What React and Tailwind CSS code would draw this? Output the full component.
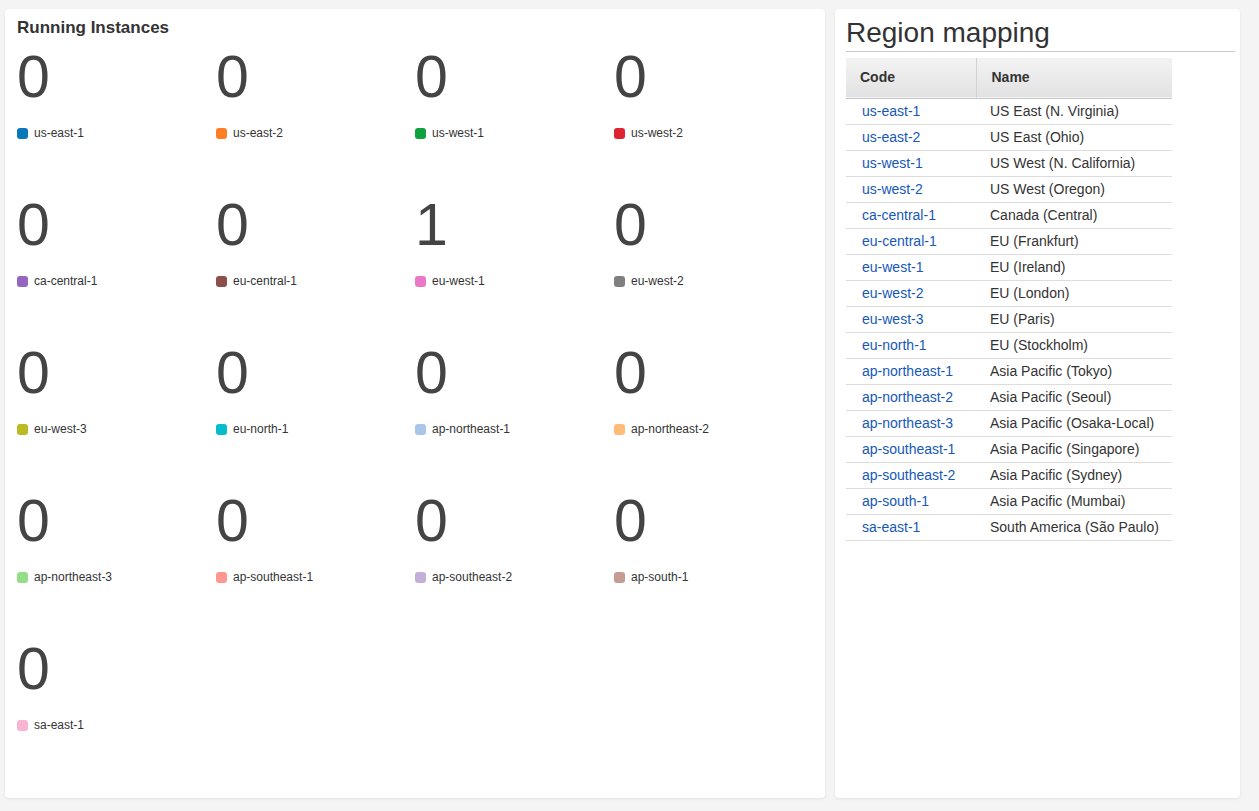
import React from 'react';

const instances = [
    { code: 'us-east-1', count: 0, color: '#0a77b7' },
    { code: 'us-east-2', count: 0, color: '#fd7e23' },
    { code: 'us-west-1', count: 0, color: '#0fa13f' },
    { code: 'us-west-2', count: 0, color: '#de2430' },
    { code: 'ca-central-1', count: 0, color: '#9466bd' },
    { code: 'eu-central-1', count: 0, color: '#8b5049' },
    { code: 'eu-west-1', count: 1, color: '#ea78c6' },
    { code: 'eu-west-2', count: 0, color: '#7f7f7f' },
    { code: 'eu-west-3', count: 0, color: '#babb24' },
    { code: 'eu-north-1', count: 0, color: '#06bccd' },
    { code: 'ap-northeast-1', count: 0, color: '#a9c6e9' },
    { code: 'ap-northeast-2', count: 0, color: '#ffbb78' },
    { code: 'ap-northeast-3', count: 0, color: '#93df88' },
    { code: 'ap-southeast-1', count: 0, color: '#ff9692' },
    { code: 'ap-southeast-2', count: 0, color: '#c4afd6' },
    { code: 'ap-south-1', count: 0, color: '#c59b93' },
    { code: 'sa-east-1', count: 0, color: '#f8b4d3' },
];

const regions = [
    ['us-east-1', 'US East (N. Virginia)'],
    ['us-east-2', 'US East (Ohio)'],
    ['us-west-1', 'US West (N. California)'],
    ['us-west-2', 'US West (Oregon)'],
    ['ca-central-1', 'Canada (Central)'],
    ['eu-central-1', 'EU (Frankfurt)'],
    ['eu-west-1', 'EU (Ireland)'],
    ['eu-west-2', 'EU (London)'],
    ['eu-west-3', 'EU (Paris)'],
    ['eu-north-1', 'EU (Stockholm)'],
    ['ap-northeast-1', 'Asia Pacific (Tokyo)'],
    ['ap-northeast-2', 'Asia Pacific (Seoul)'],
    ['ap-northeast-3', 'Asia Pacific (Osaka-Local)'],
    ['ap-southeast-1', 'Asia Pacific (Singapore)'],
    ['ap-southeast-2', 'Asia Pacific (Sydney)'],
    ['ap-south-1', 'Asia Pacific (Mumbai)'],
    ['sa-east-1', 'South America (São Paulo)'],
];

function InstanceCell({ item }) {
    return (
        <div className="h-[148px]">
            <div className="text-[59px] leading-[60px] text-[#444]">{item.count}</div>
            <div className="mt-[18px] h-4 flex items-center gap-[6px]">
                <span className="w-[11px] h-[11px] rounded-[3px]" style={{ backgroundColor: item.color }} />
                <span className="text-[12px] text-[#333]">{item.code}</span>
            </div>
        </div>
    );
}

export default function App() {
    return (
        <div className="min-h-[811px] bg-[#f4f4f4] flex gap-[10px] pt-[9px] pl-[5px] pb-[13px] font-['Liberation_Sans',Arial,sans-serif]">
            {/* Running instances */}
            <div className="w-[820px] h-[789px] bg-white rounded-[4px] shadow-[0_1px_3px_rgba(0,0,0,0.08)] pt-[9px] px-[12px]">
                <h2 className="text-[17px] leading-[20px] font-bold text-[#333]">Running Instances</h2>
                <div className="mt-[9px] grid grid-cols-[199px_199px_199px_199px]">
                    {instances.map(item => (
                        <InstanceCell key={item.code} item={item} />
                    ))}
                </div>
            </div>

            {/* Region mapping */}
            <div className="w-[405px] h-[789px] bg-white rounded-[4px] shadow-[0_1px_3px_rgba(0,0,0,0.08)] pt-[8px] pl-[11px] pr-[5px]">
                <h2 className="text-[28px] leading-[32px] text-[#333] pb-[2px] border-b border-[#c8c8c8]">Region mapping</h2>
                <table className="mt-[6px] w-[326px] border-collapse text-[14px]">
                    <thead>
                        <tr className="h-[40px] bg-gradient-to-b from-[#f3f3f3] to-[#e2e2e2] border-b border-[#c6c6c6]">
                            <th className="w-[130px] text-left font-bold text-[#333] pl-[14px] border-r border-[#d2d2d2]">Code</th>
                            <th className="text-left font-bold text-[#333] pl-[15px]">Name</th>
                        </tr>
                    </thead>
                    <tbody>
                        {regions.map(([code, name]) => (
                            <tr key={code} className="h-[26px] border-b border-[#dddddd]">
                                <td className="pl-[16px] text-[#1558b8]">{code}</td>
                                <td className="pl-[14px] text-[#333]">{name}</td>
                            </tr>
                        ))}
                    </tbody>
                </table>
            </div>
        </div>
    );
}
